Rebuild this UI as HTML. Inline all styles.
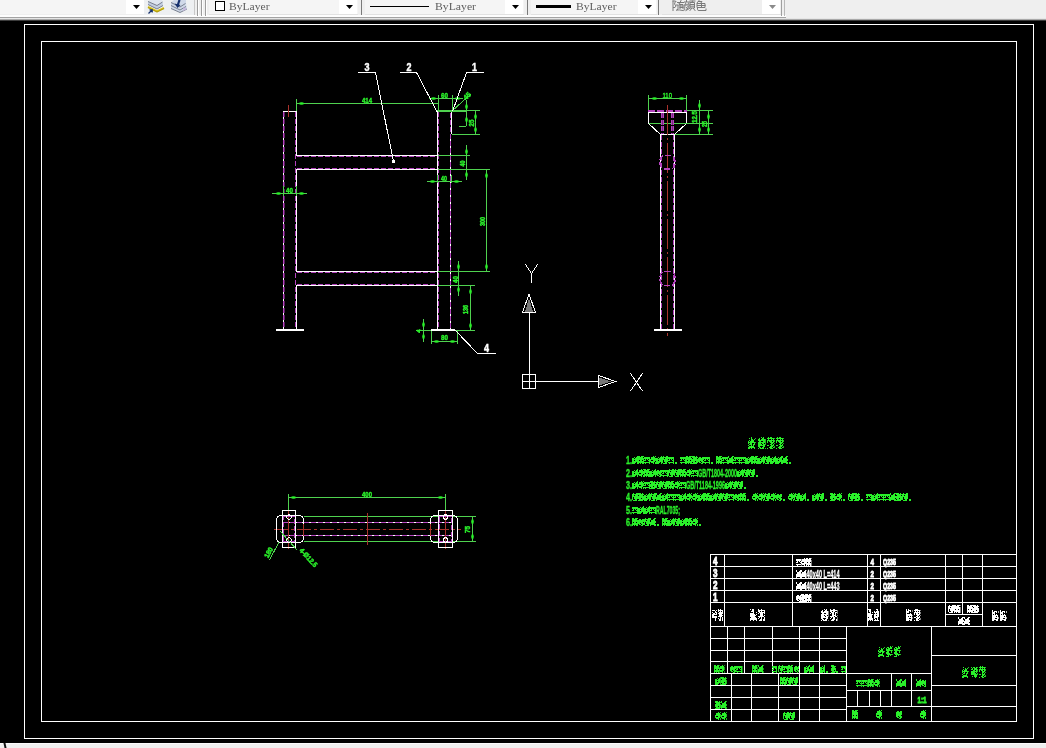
<!DOCTYPE html>
<html><head><meta charset="utf-8">
<style>
html,body{margin:0;padding:0;}
body{width:1046px;height:748px;overflow:hidden;background:#000;position:relative;font-family:"Liberation Sans",sans-serif;}
#bot{position:absolute;left:0;top:743px;width:1046px;height:5px;background:#efefef;}
#bot2{position:absolute;left:0;top:743px;width:1046px;height:1px;background:#fafafa;}
</style></head><body>
<svg width="1046" height="748" viewBox="0 0 1046 748" style="position:absolute;left:0;top:0;will-change:transform" shape-rendering="crispEdges">
<defs><symbol id="d0" viewBox="0 0 6 8" preserveAspectRatio="none"><path d="M3 0h1v1h-1zM5 0h1v1h-1zM1 1h4v1h-4zM1 2h5v1h-5zM0 3h6v1h-6zM0 4h1v1h-1zM3 4h3v1h-3zM0 5h5v1h-5zM1 6h3v1h-3zM5 6h1v1h-1zM3 7h1v1h-1zM5 7h1v1h-1z" fill="currentColor"/></symbol><symbol id="d1" viewBox="0 0 6 8" preserveAspectRatio="none"><path d="M0 0h2v1h-2zM3 0h3v1h-3zM0 1h5v1h-5zM0 2h6v1h-6zM0 3h6v1h-6zM0 4h1v1h-1zM2 4h2v1h-2zM5 4h1v1h-1zM0 5h6v1h-6zM0 6h6v1h-6zM0 7h1v1h-1zM2 7h1v1h-1zM4 7h2v1h-2z" fill="currentColor"/></symbol><symbol id="d2" viewBox="0 0 6 8" preserveAspectRatio="none"><path d="M0 0h3v1h-3zM4 0h1v1h-1zM0 1h6v1h-6zM1 2h4v1h-4zM0 3h6v1h-6zM0 4h6v1h-6zM0 5h3v1h-3zM4 5h2v1h-2zM1 6h5v1h-5zM0 7h5v1h-5z" fill="currentColor"/></symbol><symbol id="d3" viewBox="0 0 6 8" preserveAspectRatio="none"><path d="M1 0h1v1h-1zM4 0h2v1h-2zM0 1h6v1h-6zM0 2h2v1h-2zM3 2h3v1h-3zM0 3h6v1h-6zM0 4h1v1h-1zM2 4h4v1h-4zM0 5h1v1h-1zM2 5h4v1h-4zM0 6h1v1h-1zM3 6h2v1h-2zM1 7h4v1h-4z" fill="currentColor"/></symbol><symbol id="d4" viewBox="0 0 6 8" preserveAspectRatio="none"><path d="M1 1h2v1h-2zM4 1h2v1h-2zM0 2h6v1h-6zM0 3h6v1h-6zM0 4h5v1h-5zM0 5h2v1h-2zM3 5h3v1h-3zM1 6h2v1h-2zM4 6h2v1h-2zM3 7h2v1h-2z" fill="currentColor"/></symbol><symbol id="d5" viewBox="0 0 6 8" preserveAspectRatio="none"><path d="M0 1h6v1h-6zM0 2h6v1h-6zM1 3h1v1h-1zM3 3h1v1h-1zM5 3h1v1h-1zM0 4h2v1h-2zM4 4h2v1h-2zM5 5h1v1h-1zM0 6h6v1h-6zM1 7h1v1h-1zM5 7h1v1h-1z" fill="currentColor"/></symbol><symbol id="d6" viewBox="0 0 6 8" preserveAspectRatio="none"><path d="M5 0h1v1h-1zM2 1h1v1h-1zM4 1h2v1h-2zM0 2h2v1h-2zM3 2h3v1h-3zM0 3h6v1h-6zM0 4h2v1h-2zM3 4h3v1h-3zM0 5h6v1h-6zM0 6h4v1h-4zM5 6h1v1h-1zM0 7h3v1h-3zM5 7h1v1h-1z" fill="currentColor"/></symbol><symbol id="d7" viewBox="0 0 6 8" preserveAspectRatio="none"><path d="M0 0h1v1h-1zM4 0h2v1h-2zM0 1h1v1h-1zM3 1h2v1h-2zM1 2h4v1h-4zM1 3h5v1h-5zM0 4h6v1h-6zM0 5h5v1h-5zM0 6h6v1h-6zM0 7h1v1h-1zM4 7h2v1h-2z" fill="currentColor"/></symbol><symbol id="b0" viewBox="0 0 8 12" preserveAspectRatio="none"><path d="M0 0h1v1h-1zM3 0h1v1h-1zM0 1h1v1h-1zM2 1h4v1h-4zM7 1h1v1h-1zM0 2h4v1h-4zM5 2h1v1h-1zM7 2h1v1h-1zM0 3h4v1h-4zM0 4h1v1h-1zM2 4h1v1h-1zM5 4h1v1h-1zM0 5h7v1h-7zM0 6h8v1h-8zM0 7h3v1h-3zM4 7h1v1h-1zM6 7h1v1h-1zM0 8h8v1h-8zM0 9h4v1h-4zM6 9h2v1h-2zM0 10h7v1h-7zM0 11h2v1h-2zM3 11h1v1h-1zM5 11h2v1h-2z" fill="currentColor"/></symbol><symbol id="b1" viewBox="0 0 8 12" preserveAspectRatio="none"><path d="M5 0h1v1h-1zM7 0h1v1h-1zM1 1h3v1h-3zM5 1h2v1h-2zM0 2h1v1h-1zM2 2h5v1h-5zM0 3h3v1h-3zM4 3h1v1h-1zM0 4h8v1h-8zM1 5h3v1h-3zM6 5h1v1h-1zM1 6h2v1h-2zM4 6h1v1h-1zM6 6h1v1h-1zM0 7h4v1h-4zM6 7h1v1h-1zM0 8h5v1h-5zM1 9h2v1h-2zM4 9h4v1h-4zM2 10h2v1h-2zM5 10h1v1h-1zM0 11h3v1h-3z" fill="currentColor"/></symbol><symbol id="b2" viewBox="0 0 8 12" preserveAspectRatio="none"><path d="M0 1h1v1h-1zM2 1h3v1h-3zM6 1h2v1h-2zM1 2h1v1h-1zM4 2h3v1h-3zM0 3h2v1h-2zM4 3h4v1h-4zM2 4h3v1h-3zM6 4h2v1h-2zM0 5h8v1h-8zM0 6h3v1h-3zM4 6h1v1h-1zM6 6h1v1h-1zM0 7h6v1h-6zM7 7h1v1h-1zM0 8h8v1h-8zM4 9h3v1h-3zM1 10h1v1h-1zM4 10h3v1h-3zM5 11h1v1h-1z" fill="currentColor"/></symbol><symbol id="b3" viewBox="0 0 8 12" preserveAspectRatio="none"><path d="M1 0h1v1h-1zM3 0h2v1h-2zM0 1h8v1h-8zM1 2h1v1h-1zM4 2h1v1h-1zM6 2h1v1h-1zM0 3h8v1h-8zM0 4h1v1h-1zM2 4h3v1h-3zM6 4h2v1h-2zM0 5h1v1h-1zM3 5h4v1h-4zM4 6h2v1h-2zM7 6h1v1h-1zM3 7h2v1h-2zM6 7h1v1h-1zM0 8h2v1h-2zM4 8h3v1h-3zM3 9h3v1h-3zM7 9h1v1h-1zM2 10h3v1h-3zM6 10h2v1h-2zM0 11h1v1h-1zM3 11h3v1h-3z" fill="currentColor"/></symbol><symbol id="b4" viewBox="0 0 8 12" preserveAspectRatio="none"><path d="M0 0h1v1h-1zM3 0h2v1h-2zM0 1h8v1h-8zM0 2h2v1h-2zM3 2h2v1h-2zM7 2h1v1h-1zM1 3h3v1h-3zM5 3h3v1h-3zM0 4h1v1h-1zM2 4h2v1h-2zM5 4h1v1h-1zM7 4h1v1h-1zM2 5h2v1h-2zM5 5h1v1h-1zM2 6h4v1h-4zM7 6h1v1h-1zM0 7h4v1h-4zM5 7h2v1h-2zM1 8h1v1h-1zM3 8h2v1h-2zM7 8h1v1h-1zM0 9h1v1h-1zM3 9h2v1h-2zM7 9h1v1h-1zM2 10h3v1h-3zM6 10h2v1h-2zM1 11h3v1h-3zM6 11h2v1h-2z" fill="currentColor"/></symbol><symbol id="b5" viewBox="0 0 8 12" preserveAspectRatio="none"><path d="M0 0h1v1h-1zM2 0h2v1h-2zM2 1h2v1h-2zM1 2h4v1h-4zM3 3h2v1h-2zM7 3h1v1h-1zM0 4h4v1h-4zM0 5h4v1h-4zM5 5h1v1h-1zM7 5h1v1h-1zM0 6h7v1h-7zM0 7h4v1h-4zM5 7h1v1h-1zM1 8h6v1h-6zM0 9h8v1h-8zM0 10h4v1h-4zM5 10h3v1h-3zM0 11h1v1h-1zM3 11h2v1h-2zM7 11h1v1h-1z" fill="currentColor"/></symbol><symbol id="b6" viewBox="0 0 8 12" preserveAspectRatio="none"><path d="M3 0h1v1h-1zM1 1h1v1h-1zM3 1h1v1h-1zM7 1h1v1h-1zM3 2h2v1h-2zM6 2h1v1h-1zM1 3h1v1h-1zM3 3h3v1h-3zM0 4h1v1h-1zM2 4h4v1h-4zM0 5h8v1h-8zM0 6h1v1h-1zM2 6h2v1h-2zM6 6h1v1h-1zM1 7h3v1h-3zM5 7h2v1h-2zM0 8h1v1h-1zM3 8h1v1h-1zM5 8h1v1h-1zM1 9h5v1h-5zM0 10h7v1h-7zM0 11h2v1h-2zM3 11h1v1h-1zM6 11h1v1h-1z" fill="currentColor"/></symbol><symbol id="b7" viewBox="0 0 8 12" preserveAspectRatio="none"><path d="M3 0h1v1h-1zM5 0h1v1h-1zM1 1h1v1h-1zM4 1h2v1h-2zM0 2h2v1h-2zM3 2h5v1h-5zM0 3h8v1h-8zM1 4h2v1h-2zM5 4h3v1h-3zM0 5h8v1h-8zM0 6h3v1h-3zM4 6h2v1h-2zM7 6h1v1h-1zM0 7h4v1h-4zM5 7h3v1h-3zM0 8h7v1h-7zM0 9h2v1h-2zM5 9h2v1h-2zM1 10h2v1h-2zM4 10h2v1h-2zM0 11h1v1h-1zM2 11h4v1h-4zM7 11h1v1h-1z" fill="currentColor"/></symbol><symbol id="g0" viewBox="0 0 8 8" preserveAspectRatio="none"><path d="M0 0h8v1H0zM0 3h8v1H0zM0 7h8v1H0zM1 0h1v8H1zM5 0h1v8H5z" fill="currentColor"/></symbol><symbol id="g1" viewBox="0 0 8 8" preserveAspectRatio="none"><path d="M0 1h8v1H0zM3 0h1v8H3zM0 4h8v1H0zM1 6h6v1H1zM6 2h1v6H6z" fill="currentColor"/></symbol><symbol id="g2" viewBox="0 0 8 8" preserveAspectRatio="none"><path d="M1 0h1v8H1zM0 2h3v1H0zM3 1h5v1H3zM4 3h4v1H4zM4 5h4v1H4zM3 7h5v1H3zM5 1h1v7H5z" fill="currentColor"/></symbol><symbol id="g3" viewBox="0 0 8 8" preserveAspectRatio="none"><path d="M0 0h3v1H0zM1 0h1v8H1zM0 4h3v1H0zM4 0h4v1H4zM4 0h1v8H4zM7 0h1v8H7zM4 3h4v1H4zM4 7h4v1H4z" fill="currentColor"/></symbol><symbol id="g4" viewBox="0 0 8 8" preserveAspectRatio="none"><path d="M0 1h8v1H0zM2 0h1v3H2zM5 0h1v3H5zM1 3h6v1H1zM1 3h1v5H1zM6 3h1v5H6zM1 5h6v1H1zM0 7h8v1H0zM3 4h1v4H3z" fill="currentColor"/></symbol><symbol id="g5" viewBox="0 0 8 8" preserveAspectRatio="none"><path d="M0 0h1v8H0zM2 0h6v1H2zM2 2h6v1H2zM4 0h1v8H4zM2 4h6v1H2zM2 6h6v1H2zM7 4h1v4H7z" fill="currentColor"/></symbol></defs>
<g shape-rendering="crispEdges">
<rect x="24.5" y="24.5" width="1009" height="714" fill="none" stroke="#ffffff"/>
<rect x="41.5" y="41.5" width="975" height="680" fill="none" stroke="#ffffff"/>
<line x1="283.5" y1="111" x2="283.5" y2="330" stroke="#ffffff" stroke-width="1"/>
<line x1="296.5" y1="111" x2="296.5" y2="156" stroke="#ffffff" stroke-width="1"/>
<line x1="296.5" y1="169" x2="296.5" y2="272" stroke="#ffffff" stroke-width="1"/>
<line x1="296.5" y1="285" x2="296.5" y2="330" stroke="#ffffff" stroke-width="1"/>
<line x1="283" y1="111.5" x2="297" y2="111.5" stroke="#ffffff" stroke-width="1"/>
<rect x="276" y="329" width="28" height="2" fill="#ffffff"/>
<line x1="296" y1="155.5" x2="438" y2="155.5" stroke="#ffffff" stroke-width="1"/>
<line x1="296" y1="169.5" x2="438" y2="169.5" stroke="#ffffff" stroke-width="1"/>
<line x1="296" y1="271.5" x2="438" y2="271.5" stroke="#ffffff" stroke-width="1"/>
<line x1="296" y1="285.5" x2="438" y2="285.5" stroke="#ffffff" stroke-width="1"/>
<line x1="437.5" y1="111" x2="437.5" y2="330" stroke="#ffffff" stroke-width="1"/>
<line x1="451.5" y1="111" x2="451.5" y2="134" stroke="#ffffff" stroke-width="1"/>
<line x1="450.5" y1="134" x2="450.5" y2="330" stroke="#ffffff" stroke-width="1"/>
<rect x="431" y="329" width="24" height="2" fill="#ffffff"/>
<line x1="283.5" y1="112" x2="283.5" y2="329" stroke="#b443be" stroke-width="1" stroke-dasharray="5,2"/>
<line x1="284.5" y1="112" x2="284.5" y2="329" stroke="#5a1f60" stroke-width="1" stroke-dasharray="5,2"/>
<line x1="295.5" y1="112" x2="295.5" y2="329" stroke="#b443be" stroke-width="1" stroke-dasharray="5,2"/>
<line x1="297" y1="156.5" x2="437" y2="156.5" stroke="#b443be" stroke-width="1" stroke-dasharray="5,2"/>
<line x1="297" y1="168.5" x2="437" y2="168.5" stroke="#b443be" stroke-width="1" stroke-dasharray="5,2"/>
<line x1="297" y1="272.5" x2="437" y2="272.5" stroke="#b443be" stroke-width="1" stroke-dasharray="5,2"/>
<line x1="297" y1="284.5" x2="437" y2="284.5" stroke="#b443be" stroke-width="1" stroke-dasharray="5,2"/>
<line x1="438.5" y1="112" x2="438.5" y2="329" stroke="#b443be" stroke-width="1" stroke-dasharray="5,2"/>
<line x1="450.5" y1="113" x2="450.5" y2="329" stroke="#b443be" stroke-width="1" stroke-dasharray="5,2"/>
<line x1="288.5" y1="105" x2="288.5" y2="117" stroke="#a8322c" stroke-width="1"/>
</g>
<g shape-rendering="crispEdges">
<line x1="296" y1="103.5" x2="438" y2="103.5" stroke="#4fd24f" stroke-width="1"/>
<line x1="296.5" y1="99" x2="296.5" y2="111" stroke="#4fd24f" stroke-width="1"/>
<ellipse cx="301.5" cy="103.5" rx="2.5" ry="1.3" fill="#2af02a" shape-rendering="auto"/>
<line x1="429" y1="98.5" x2="463" y2="98.5" stroke="#4fd24f" stroke-width="1"/>
<line x1="438.5" y1="95" x2="438.5" y2="111" stroke="#4fd24f" stroke-width="1"/>
<line x1="452.5" y1="95" x2="452.5" y2="111" stroke="#4fd24f" stroke-width="1"/>
<ellipse cx="433.5" cy="98.5" rx="2.5" ry="1.3" fill="#2af02a" shape-rendering="auto"/>
<ellipse cx="457.5" cy="98.5" rx="2.5" ry="1.3" fill="#2af02a" shape-rendering="auto"/>
<rect x="437" y="110" width="29" height="2" fill="#4fd24f"/>
<line x1="466" y1="110.5" x2="480" y2="110.5" stroke="#4fd24f" stroke-width="1"/>
<line x1="452" y1="134.5" x2="480" y2="134.5" stroke="#4fd24f" stroke-width="1"/>
<line x1="475.5" y1="111" x2="475.5" y2="134" stroke="#4fd24f" stroke-width="1"/>
<ellipse cx="475.5" cy="116.5" rx="1.3" ry="2.5" fill="#2af02a" shape-rendering="auto"/>
<ellipse cx="475.5" cy="129.5" rx="1.3" ry="2.5" fill="#2af02a" shape-rendering="auto"/>
<line x1="466.5" y1="100" x2="466.5" y2="126" stroke="#4fd24f" stroke-width="1"/>
<line x1="459" y1="126.5" x2="466" y2="126.5" stroke="#4fd24f" stroke-width="1"/>
<ellipse cx="466.5" cy="106.5" rx="1.3" ry="2.5" fill="#2af02a" shape-rendering="auto"/>
<ellipse cx="466.5" cy="119.5" rx="1.3" ry="2.5" fill="#2af02a" shape-rendering="auto"/>
<line x1="438" y1="155.5" x2="470" y2="155.5" stroke="#4fd24f" stroke-width="1"/>
<line x1="438" y1="169.5" x2="490" y2="169.5" stroke="#4fd24f" stroke-width="1"/>
<line x1="466.5" y1="145" x2="466.5" y2="180" stroke="#4fd24f" stroke-width="1"/>
<ellipse cx="466.5" cy="151.5" rx="1.3" ry="2.5" fill="#2af02a" shape-rendering="auto"/>
<ellipse cx="466.5" cy="174.5" rx="1.3" ry="2.5" fill="#2af02a" shape-rendering="auto"/>
<line x1="486.5" y1="169" x2="486.5" y2="271" stroke="#4fd24f" stroke-width="1"/>
<ellipse cx="486.5" cy="175.5" rx="1.3" ry="2.5" fill="#2af02a" shape-rendering="auto"/>
<ellipse cx="486.5" cy="266.5" rx="1.3" ry="2.5" fill="#2af02a" shape-rendering="auto"/>
<line x1="438" y1="271.5" x2="490" y2="271.5" stroke="#4fd24f" stroke-width="1"/>
<line x1="458.5" y1="261" x2="458.5" y2="296" stroke="#4fd24f" stroke-width="1"/>
<ellipse cx="458.5" cy="266.5" rx="1.3" ry="2.5" fill="#2af02a" shape-rendering="auto"/>
<ellipse cx="458.5" cy="289.5" rx="1.3" ry="2.5" fill="#2af02a" shape-rendering="auto"/>
<line x1="438" y1="285.5" x2="475" y2="285.5" stroke="#4fd24f" stroke-width="1"/>
<line x1="470.5" y1="285" x2="470.5" y2="330" stroke="#4fd24f" stroke-width="1"/>
<ellipse cx="470.5" cy="291.5" rx="1.3" ry="2.5" fill="#2af02a" shape-rendering="auto"/>
<ellipse cx="470.5" cy="325.5" rx="1.3" ry="2.5" fill="#2af02a" shape-rendering="auto"/>
<line x1="455" y1="330.5" x2="475" y2="330.5" stroke="#4fd24f" stroke-width="1"/>
<line x1="427" y1="181.5" x2="462" y2="181.5" stroke="#4fd24f" stroke-width="1"/>
<line x1="437.5" y1="175" x2="437.5" y2="183" stroke="#4fd24f" stroke-width="1"/>
<line x1="451.5" y1="175" x2="451.5" y2="183" stroke="#4fd24f" stroke-width="1"/>
<ellipse cx="432.5" cy="181.5" rx="2.5" ry="1.3" fill="#2af02a" shape-rendering="auto"/>
<ellipse cx="456.5" cy="181.5" rx="2.5" ry="1.3" fill="#2af02a" shape-rendering="auto"/>
<line x1="272" y1="193.5" x2="307" y2="193.5" stroke="#4fd24f" stroke-width="1"/>
<line x1="283.5" y1="186" x2="283.5" y2="196" stroke="#4fd24f" stroke-width="1"/>
<line x1="296.5" y1="186" x2="296.5" y2="196" stroke="#4fd24f" stroke-width="1"/>
<ellipse cx="278.5" cy="193.5" rx="2.5" ry="1.3" fill="#2af02a" shape-rendering="auto"/>
<ellipse cx="301.5" cy="193.5" rx="2.5" ry="1.3" fill="#2af02a" shape-rendering="auto"/>
<line x1="431" y1="341.5" x2="458" y2="341.5" stroke="#4fd24f" stroke-width="1"/>
<line x1="431.5" y1="331" x2="431.5" y2="344" stroke="#4fd24f" stroke-width="1"/>
<line x1="457.5" y1="331" x2="457.5" y2="344" stroke="#4fd24f" stroke-width="1"/>
<ellipse cx="436.5" cy="341.5" rx="2.5" ry="1.3" fill="#2af02a" shape-rendering="auto"/>
<ellipse cx="452.5" cy="341.5" rx="2.5" ry="1.3" fill="#2af02a" shape-rendering="auto"/>
<line x1="423.5" y1="319" x2="423.5" y2="342" stroke="#4fd24f" stroke-width="1"/>
<line x1="416" y1="330.5" x2="431" y2="330.5" stroke="#4fd24f" stroke-width="1"/>
<ellipse cx="423.5" cy="324.5" rx="1.3" ry="2.5" fill="#2af02a" shape-rendering="auto"/>
<ellipse cx="423.5" cy="336.5" rx="1.3" ry="2.5" fill="#2af02a" shape-rendering="auto"/>
</g>
<line x1="452" y1="111" x2="471" y2="94" stroke="#4fd24f" stroke-width="1"/>
<text x="0" y="0" transform="translate(467,96) rotate(-45)" text-anchor="middle" dominant-baseline="central" font-family="Liberation Sans" font-weight="bold" font-size="7" fill="#2af02a" stroke="#2af02a" stroke-width="0.45">45</text>
<text x="362" y="103" text-anchor="start" font-family="Liberation Sans" font-weight="bold" font-size="8" fill="#2af02a" stroke="#2af02a" stroke-width="0.45" textLength="10" lengthAdjust="spacingAndGlyphs">414</text>
<text x="441" y="98" text-anchor="start" font-family="Liberation Sans" font-weight="bold" font-size="8" fill="#2af02a" stroke="#2af02a" stroke-width="0.45" textLength="7" lengthAdjust="spacingAndGlyphs">60</text>
<text x="0" y="0" transform="translate(471,123) rotate(-90)" text-anchor="middle" dominant-baseline="central" font-family="Liberation Sans" font-weight="bold" font-size="7" fill="#2af02a" stroke="#2af02a" stroke-width="0.45" textLength="7" lengthAdjust="spacingAndGlyphs">25</text>
<text x="0" y="0" transform="translate(462.5,163.5) rotate(-90)" text-anchor="middle" dominant-baseline="central" font-family="Liberation Sans" font-weight="bold" font-size="7" fill="#2af02a" stroke="#2af02a" stroke-width="0.45" textLength="6" lengthAdjust="spacingAndGlyphs">40</text>
<text x="0" y="0" transform="translate(482,221.5) rotate(-90)" text-anchor="middle" dominant-baseline="central" font-family="Liberation Sans" font-weight="bold" font-size="7" fill="#2af02a" stroke="#2af02a" stroke-width="0.45" textLength="9" lengthAdjust="spacingAndGlyphs">300</text>
<text x="0" y="0" transform="translate(455,279.5) rotate(-90)" text-anchor="middle" dominant-baseline="central" font-family="Liberation Sans" font-weight="bold" font-size="7" fill="#2af02a" stroke="#2af02a" stroke-width="0.45" textLength="7" lengthAdjust="spacingAndGlyphs">40</text>
<text x="0" y="0" transform="translate(465.5,309.5) rotate(-90)" text-anchor="middle" dominant-baseline="central" font-family="Liberation Sans" font-weight="bold" font-size="7" fill="#2af02a" stroke="#2af02a" stroke-width="0.45" textLength="9" lengthAdjust="spacingAndGlyphs">136</text>
<text x="441" y="181" text-anchor="start" font-family="Liberation Sans" font-weight="bold" font-size="8" fill="#2af02a" stroke="#2af02a" stroke-width="0.45" textLength="6" lengthAdjust="spacingAndGlyphs">40</text>
<text x="286" y="193" text-anchor="start" font-family="Liberation Sans" font-weight="bold" font-size="8" fill="#2af02a" stroke="#2af02a" stroke-width="0.45" textLength="7" lengthAdjust="spacingAndGlyphs">40</text>
<text x="441" y="339.5" text-anchor="start" font-family="Liberation Sans" font-weight="bold" font-size="8" fill="#2af02a" stroke="#2af02a" stroke-width="0.45" textLength="7" lengthAdjust="spacingAndGlyphs">80</text>
<text x="0" y="0" transform="translate(419,331) rotate(-90)" text-anchor="middle" dominant-baseline="central" font-family="Liberation Sans" font-weight="bold" font-size="6" fill="#2af02a" stroke="#2af02a" stroke-width="0.45">4</text>
<line x1="358" y1="72.5" x2="376" y2="72.5" stroke="#ffffff" stroke-width="1"/>
<line x1="375.5" y1="72.5" x2="393.5" y2="161.5" stroke="#ffffff" stroke-width="1"/>
<rect x="392" y="160" width="3" height="3" fill="#ffffff"/>
<line x1="400" y1="72.5" x2="417" y2="72.5" stroke="#ffffff" stroke-width="1"/>
<line x1="416.5" y1="72.5" x2="437.5" y2="112.5" stroke="#ffffff" stroke-width="1"/>
<line x1="466" y1="72.5" x2="484" y2="72.5" stroke="#ffffff" stroke-width="1"/>
<line x1="466.5" y1="72.5" x2="452.5" y2="111.5" stroke="#ffffff" stroke-width="1"/>
<line x1="455" y1="330" x2="477.5" y2="353.5" stroke="#ffffff" stroke-width="1"/>
<line x1="477" y1="353.5" x2="496" y2="353.5" stroke="#ffffff" stroke-width="1"/>
<text x="364.5" y="71" text-anchor="start" font-family="Liberation Sans" font-weight="bold" font-size="10" fill="#ffffff" stroke="#ffffff" stroke-width="0.45" textLength="5" lengthAdjust="spacingAndGlyphs">3</text>
<text x="406.5" y="71" text-anchor="start" font-family="Liberation Sans" font-weight="bold" font-size="10" fill="#ffffff" stroke="#ffffff" stroke-width="0.45" textLength="5" lengthAdjust="spacingAndGlyphs">2</text>
<text x="472" y="71" text-anchor="start" font-family="Liberation Sans" font-weight="bold" font-size="10" fill="#ffffff" stroke="#ffffff" stroke-width="0.45" textLength="5" lengthAdjust="spacingAndGlyphs">1</text>
<text x="484" y="352" text-anchor="start" font-family="Liberation Sans" font-weight="bold" font-size="10" fill="#ffffff" stroke="#ffffff" stroke-width="0.45" textLength="5" lengthAdjust="spacingAndGlyphs">4</text>
<g shape-rendering="crispEdges">
<line x1="648" y1="98.5" x2="687" y2="98.5" stroke="#4fd24f" stroke-width="1"/>
<line x1="648.5" y1="95" x2="648.5" y2="111" stroke="#4fd24f" stroke-width="1"/>
<line x1="686.5" y1="95" x2="686.5" y2="111" stroke="#4fd24f" stroke-width="1"/>
<ellipse cx="654.5" cy="98.5" rx="2.5" ry="1.3" fill="#2af02a" shape-rendering="auto"/>
<ellipse cx="681.5" cy="98.5" rx="2.5" ry="1.3" fill="#2af02a" shape-rendering="auto"/>
<line x1="648" y1="110.5" x2="687" y2="110.5" stroke="#b443be" stroke-width="2" stroke-dasharray="7,2"/>
<line x1="648" y1="112.5" x2="687" y2="112.5" stroke="#ffffff" stroke-width="1"/>
<line x1="648.5" y1="112" x2="648.5" y2="123" stroke="#ffffff" stroke-width="1"/>
<line x1="686.5" y1="112" x2="686.5" y2="123" stroke="#ffffff" stroke-width="1"/>
<line x1="648" y1="123.5" x2="713" y2="123.5" stroke="#4fd24f" stroke-width="1"/>
<line x1="687" y1="110.5" x2="713" y2="110.5" stroke="#4fd24f" stroke-width="1"/>
<line x1="661" y1="134.5" x2="713" y2="134.5" stroke="#4fd24f" stroke-width="1"/>
<line x1="660" y1="134.5" x2="675" y2="134.5" stroke="#ffffff" stroke-width="1"/>
<line x1="699.5" y1="100" x2="699.5" y2="134" stroke="#4fd24f" stroke-width="1"/>
<ellipse cx="699.5" cy="105.5" rx="1.3" ry="2.5" fill="#2af02a" shape-rendering="auto"/>
<ellipse cx="699.5" cy="129.5" rx="1.3" ry="2.5" fill="#2af02a" shape-rendering="auto"/>
<line x1="708.5" y1="110" x2="708.5" y2="134" stroke="#4fd24f" stroke-width="1"/>
<ellipse cx="708.5" cy="116.5" rx="1.3" ry="2.5" fill="#2af02a" shape-rendering="auto"/>
<ellipse cx="708.5" cy="129.5" rx="1.3" ry="2.5" fill="#2af02a" shape-rendering="auto"/>
<line x1="660.5" y1="134" x2="660.5" y2="330" stroke="#ffffff" stroke-width="1"/>
<line x1="674.5" y1="134" x2="674.5" y2="330" stroke="#ffffff" stroke-width="1"/>
<line x1="661.5" y1="135" x2="661.5" y2="329" stroke="#b443be" stroke-width="1" stroke-dasharray="5,2"/>
<line x1="673.5" y1="135" x2="673.5" y2="329" stroke="#b443be" stroke-width="1" stroke-dasharray="5,2"/>
<line x1="661.5" y1="113" x2="661.5" y2="134" stroke="#b443be" stroke-width="1" stroke-dasharray="5,1.5"/>
<line x1="663.5" y1="113" x2="663.5" y2="134" stroke="#b443be" stroke-width="1" stroke-dasharray="5,1.5"/>
<line x1="671.5" y1="113" x2="671.5" y2="134" stroke="#b443be" stroke-width="1" stroke-dasharray="5,1.5"/>
<line x1="673.5" y1="113" x2="673.5" y2="134" stroke="#b443be" stroke-width="1" stroke-dasharray="5,1.5"/>
<line x1="662.5" y1="113" x2="662.5" y2="134" stroke="#7a2a82" stroke-width="1" stroke-dasharray="5,1.5"/>
<line x1="672.5" y1="113" x2="672.5" y2="134" stroke="#7a2a82" stroke-width="1" stroke-dasharray="5,1.5"/>
<line x1="667.5" y1="105" x2="667.5" y2="336" stroke="#a8322c" stroke-width="1" stroke-dasharray="30,3,2,3"/>
<rect x="654" y="329" width="28" height="2" fill="#ffffff"/>
</g>
<line x1="648.5" y1="123.5" x2="660.5" y2="134.5" stroke="#ffffff" stroke-width="1"/>
<line x1="686.5" y1="123.5" x2="674.5" y2="134.5" stroke="#ffffff" stroke-width="1"/>
<rect x="660" y="155.5" width="15" height="13.5" rx="5" fill="none" stroke="#b443be" stroke-width="1.3" stroke-dasharray="6,2"/>
<rect x="660" y="271.5" width="15" height="14" rx="5" fill="none" stroke="#b443be" stroke-width="1.3" stroke-dasharray="6,2"/>
<text x="662.5" y="98" text-anchor="start" font-family="Liberation Sans" font-weight="normal" font-size="8" fill="#2af02a" stroke="#2af02a" stroke-width="0.45" textLength="9.5" lengthAdjust="spacingAndGlyphs">110</text>
<text x="0" y="0" transform="translate(694.5,117) rotate(-90)" text-anchor="middle" dominant-baseline="central" font-family="Liberation Sans" font-weight="bold" font-size="7" fill="#2af02a" stroke="#2af02a" stroke-width="0.45" textLength="12" lengthAdjust="spacingAndGlyphs">12.5</text>
<text x="0" y="0" transform="translate(704.5,124) rotate(-90)" text-anchor="middle" dominant-baseline="central" font-family="Liberation Sans" font-weight="bold" font-size="7" fill="#2af02a" stroke="#2af02a" stroke-width="0.45" textLength="6" lengthAdjust="spacingAndGlyphs">25</text>
<g shape-rendering="crispEdges">
<line x1="288" y1="497.5" x2="446" y2="497.5" stroke="#4fd24f" stroke-width="1"/>
<line x1="288.5" y1="494" x2="288.5" y2="511" stroke="#4fd24f" stroke-width="1"/>
<line x1="445.5" y1="494" x2="445.5" y2="511" stroke="#4fd24f" stroke-width="1"/>
<ellipse cx="293.5" cy="497.5" rx="2.5" ry="1.3" fill="#2af02a" shape-rendering="auto"/>
<ellipse cx="440.5" cy="497.5" rx="2.5" ry="1.3" fill="#2af02a" shape-rendering="auto"/>
<line x1="304" y1="516.5" x2="476" y2="516.5" stroke="#4fd24f" stroke-width="1"/>
<line x1="304" y1="541.5" x2="476" y2="541.5" stroke="#4fd24f" stroke-width="1"/>
<line x1="283" y1="522.5" x2="452" y2="522.5" stroke="#ffffff" stroke-width="1"/>
<line x1="283" y1="535.5" x2="452" y2="535.5" stroke="#ffffff" stroke-width="1"/>
<line x1="283" y1="522.5" x2="452" y2="522.5" stroke="#b443be" stroke-width="1" stroke-dasharray="5,2"/>
<line x1="283" y1="535.5" x2="452" y2="535.5" stroke="#b443be" stroke-width="1" stroke-dasharray="5,2"/>
<line x1="274" y1="529.5" x2="461" y2="529.5" stroke="#a8322c" stroke-width="1" stroke-dasharray="14,3,3,3"/>
<line x1="288.5" y1="511" x2="288.5" y2="549" stroke="#a8322c" stroke-width="1"/>
<line x1="367.5" y1="513" x2="367.5" y2="545" stroke="#a8322c" stroke-width="1"/>
<line x1="445.5" y1="510" x2="445.5" y2="549" stroke="#a8322c" stroke-width="1"/>
<line x1="472.5" y1="516" x2="472.5" y2="541" stroke="#4fd24f" stroke-width="1"/>
<ellipse cx="472.5" cy="521.5" rx="1.3" ry="2.5" fill="#2af02a" shape-rendering="auto"/>
<ellipse cx="472.5" cy="536.5" rx="1.3" ry="2.5" fill="#2af02a" shape-rendering="auto"/>
</g>
<rect x="282.5" y="510.5" width="13.0" height="37" fill="none" stroke="#ffffff" shape-rendering="crispEdges"/>
<rect x="283.5" y="515.5" width="11.0" height="26" fill="none" stroke="#b443be" stroke-dasharray="5,2" shape-rendering="crispEdges"/>
<rect x="283.0" y="515" width="12.0" height="2" fill="#b443be"/>
<rect x="283.0" y="541" width="12.0" height="2" fill="#b443be"/>
<rect x="438.5" y="510.5" width="14.0" height="37" fill="none" stroke="#ffffff" shape-rendering="crispEdges"/>
<rect x="439.5" y="515.5" width="12.0" height="26" fill="none" stroke="#b443be" stroke-dasharray="5,2" shape-rendering="crispEdges"/>
<rect x="439.0" y="515" width="13.0" height="2" fill="#b443be"/>
<rect x="439.0" y="541" width="13.0" height="2" fill="#b443be"/>
<rect x="276.5" y="515.5" width="27" height="27" rx="4.5" fill="none" stroke="#ffffff"/>
<rect x="430.5" y="515.5" width="27" height="27" rx="4.5" fill="none" stroke="#ffffff"/>
<line x1="303.5" y1="524" x2="303.5" y2="536" stroke="#a8322c" stroke-width="1"/>
<line x1="430.5" y1="524" x2="430.5" y2="536" stroke="#a8322c" stroke-width="1"/>
<circle cx="289" cy="517" r="2.2" fill="none" stroke="#ffffff"/>
<circle cx="289" cy="540" r="2.2" fill="none" stroke="#ffffff"/>
<circle cx="445.5" cy="517" r="2.2" fill="none" stroke="#ffffff"/>
<circle cx="445.5" cy="540" r="2.2" fill="none" stroke="#ffffff"/>
<line x1="280" y1="531" x2="297" y2="550" stroke="#4fd24f" stroke-width="1"/>
<line x1="279" y1="542" x2="269.5" y2="560" stroke="#4fd24f" stroke-width="1"/>
<text x="362" y="497" text-anchor="start" font-family="Liberation Sans" font-weight="bold" font-size="8" fill="#2af02a" stroke="#2af02a" stroke-width="0.45" textLength="10" lengthAdjust="spacingAndGlyphs">400</text>
<text x="0" y="0" transform="translate(467.5,529.5) rotate(-90)" text-anchor="middle" dominant-baseline="central" font-family="Liberation Sans" font-weight="bold" font-size="7" fill="#2af02a" stroke="#2af02a" stroke-width="0.45" textLength="7" lengthAdjust="spacingAndGlyphs">75</text>
<text x="0" y="0" transform="translate(308.5,557.5) rotate(48)" text-anchor="middle" dominant-baseline="central" font-family="Liberation Sans" font-weight="bold" font-size="7" fill="#2af02a" stroke="#2af02a" stroke-width="0.45" textLength="23" lengthAdjust="spacingAndGlyphs">4-Ø12.5</text>
<text x="0" y="0" transform="translate(268.5,552.5) rotate(-60)" text-anchor="middle" dominant-baseline="central" font-family="Liberation Sans" font-weight="bold" font-size="7" fill="#2af02a" stroke="#2af02a" stroke-width="0.45" textLength="11" lengthAdjust="spacingAndGlyphs">180</text>
<g shape-rendering="crispEdges">
<rect x="522.5" y="374.5" width="13" height="14" fill="none" stroke="#ffffff"/>
<line x1="529.5" y1="312" x2="529.5" y2="388" stroke="#ffffff" stroke-width="1"/>
<line x1="522" y1="381.5" x2="598" y2="381.5" stroke="#ffffff" stroke-width="1"/>
</g>
<path d="M522.5 312.5 L529 294 L535.5 312.5 Z" fill="none" stroke="#ffffff"/>
<path d="M525 312 L529 298 L533 312 Z" fill="#777"/>
<path d="M598.5 375.5 L615.5 381.5 L598.5 387.5 Z" fill="none" stroke="#ffffff"/>
<path d="M599 377.5 L611 381.5 L599 385.5 Z" fill="#777"/>
<path d="M525.5 264.5 L531.5 273.5 L537.5 264.5 M531.5 273.5 V283" fill="none" stroke="#ffffff"/>
<path d="M630.5 373.5 L642.5 391 M642.5 373.5 L630.5 391" fill="none" stroke="#ffffff"/>
<use href="#b6" x="748" y="437" width="7.80" height="12.00" color="#2af02a"/>
<use href="#b7" x="758" y="437" width="7.80" height="12.00" color="#2af02a"/>
<use href="#b3" x="767" y="437" width="7.80" height="12.00" color="#2af02a"/>
<use href="#b3" x="776" y="437" width="7.80" height="12.00" color="#2af02a"/>
<text x="626.00" y="464.00" font-family="Liberation Sans" font-weight="bold" font-size="10.40" fill="#2af02a" stroke="#2af02a" stroke-width="0.35" textLength="6.00" lengthAdjust="spacingAndGlyphs">1.</text>
<use href="#d6" x="632" y="456" width="6.00" height="8.00" color="#2af02a"/>
<use href="#d1" x="638" y="456" width="6.00" height="8.00" color="#2af02a"/>
<use href="#d5" x="644" y="456" width="6.00" height="8.00" color="#2af02a"/>
<use href="#d0" x="650" y="456" width="6.00" height="8.00" color="#2af02a"/>
<use href="#d6" x="656" y="456" width="6.00" height="8.00" color="#2af02a"/>
<use href="#d3" x="662" y="456" width="6.00" height="8.00" color="#2af02a"/>
<use href="#d5" x="668" y="456" width="6.00" height="8.00" color="#2af02a"/>
<rect x="674.5" y="462" width="2" height="2" fill="#2af02a"/>
<use href="#d5" x="680" y="456" width="6.00" height="8.00" color="#2af02a"/>
<use href="#d1" x="686" y="456" width="6.00" height="8.00" color="#2af02a"/>
<use href="#d2" x="692" y="456" width="6.00" height="8.00" color="#2af02a"/>
<use href="#d4" x="698" y="456" width="6.00" height="8.00" color="#2af02a"/>
<use href="#d5" x="704" y="456" width="6.00" height="8.00" color="#2af02a"/>
<rect x="710.5" y="462" width="2" height="2" fill="#2af02a"/>
<use href="#d1" x="716" y="456" width="6.00" height="8.00" color="#2af02a"/>
<use href="#d5" x="722" y="456" width="6.00" height="8.00" color="#2af02a"/>
<use href="#d7" x="728" y="456" width="6.00" height="8.00" color="#2af02a"/>
<use href="#d5" x="734" y="456" width="6.00" height="8.00" color="#2af02a"/>
<use href="#d5" x="740" y="456" width="6.00" height="8.00" color="#2af02a"/>
<use href="#d6" x="746" y="456" width="6.00" height="8.00" color="#2af02a"/>
<use href="#d1" x="752" y="456" width="6.00" height="8.00" color="#2af02a"/>
<use href="#d6" x="758" y="456" width="6.00" height="8.00" color="#2af02a"/>
<use href="#d3" x="764" y="456" width="6.00" height="8.00" color="#2af02a"/>
<use href="#d6" x="770" y="456" width="6.00" height="8.00" color="#2af02a"/>
<use href="#d6" x="776" y="456" width="6.00" height="8.00" color="#2af02a"/>
<use href="#d7" x="782" y="456" width="6.00" height="8.00" color="#2af02a"/>
<rect x="788.5" y="462" width="2" height="2" fill="#2af02a"/>
<text x="626.00" y="477.00" font-family="Liberation Sans" font-weight="bold" font-size="10.40" fill="#2af02a" stroke="#2af02a" stroke-width="0.35" textLength="6.00" lengthAdjust="spacingAndGlyphs">2.</text>
<use href="#d6" x="632" y="469" width="6.00" height="8.00" color="#2af02a"/>
<use href="#d0" x="638" y="469" width="6.00" height="8.00" color="#2af02a"/>
<use href="#d1" x="644" y="469" width="6.00" height="8.00" color="#2af02a"/>
<use href="#d6" x="650" y="469" width="6.00" height="8.00" color="#2af02a"/>
<use href="#d4" x="656" y="469" width="6.00" height="8.00" color="#2af02a"/>
<use href="#d5" x="662" y="469" width="6.00" height="8.00" color="#2af02a"/>
<use href="#d3" x="668" y="469" width="6.00" height="8.00" color="#2af02a"/>
<use href="#d3" x="674" y="469" width="6.00" height="8.00" color="#2af02a"/>
<use href="#d1" x="680" y="469" width="6.00" height="8.00" color="#2af02a"/>
<use href="#d0" x="686" y="469" width="6.00" height="8.00" color="#2af02a"/>
<use href="#d5" x="692" y="469" width="6.00" height="8.00" color="#2af02a"/>
<text x="698.00" y="477.00" font-family="Liberation Sans" font-weight="bold" font-size="10.40" fill="#2af02a" stroke="#2af02a" stroke-width="0.35" textLength="39.00" lengthAdjust="spacingAndGlyphs">GB/T1804-2000</text>
<use href="#d6" x="737" y="469" width="6.00" height="8.00" color="#2af02a"/>
<use href="#d3" x="743" y="469" width="6.00" height="8.00" color="#2af02a"/>
<use href="#d3" x="749" y="469" width="6.00" height="8.00" color="#2af02a"/>
<rect x="755.5" y="475" width="2" height="2" fill="#2af02a"/>
<text x="626.00" y="489.00" font-family="Liberation Sans" font-weight="bold" font-size="10.40" fill="#2af02a" stroke="#2af02a" stroke-width="0.35" textLength="6.00" lengthAdjust="spacingAndGlyphs">3.</text>
<use href="#d6" x="632" y="481" width="6.00" height="8.00" color="#2af02a"/>
<use href="#d0" x="638" y="481" width="6.00" height="8.00" color="#2af02a"/>
<use href="#d5" x="644" y="481" width="6.00" height="8.00" color="#2af02a"/>
<use href="#d2" x="650" y="481" width="6.00" height="8.00" color="#2af02a"/>
<use href="#d3" x="656" y="481" width="6.00" height="8.00" color="#2af02a"/>
<use href="#d3" x="662" y="481" width="6.00" height="8.00" color="#2af02a"/>
<use href="#d1" x="668" y="481" width="6.00" height="8.00" color="#2af02a"/>
<use href="#d0" x="674" y="481" width="6.00" height="8.00" color="#2af02a"/>
<use href="#d5" x="680" y="481" width="6.00" height="8.00" color="#2af02a"/>
<text x="686.00" y="489.00" font-family="Liberation Sans" font-weight="bold" font-size="10.40" fill="#2af02a" stroke="#2af02a" stroke-width="0.35" textLength="39.00" lengthAdjust="spacingAndGlyphs">GB/T1184-1996</text>
<use href="#d6" x="725" y="481" width="6.00" height="8.00" color="#2af02a"/>
<use href="#d3" x="731" y="481" width="6.00" height="8.00" color="#2af02a"/>
<use href="#d3" x="737" y="481" width="6.00" height="8.00" color="#2af02a"/>
<rect x="743.5" y="487" width="2" height="2" fill="#2af02a"/>
<text x="626.00" y="501.00" font-family="Liberation Sans" font-weight="bold" font-size="10.40" fill="#2af02a" stroke="#2af02a" stroke-width="0.35" textLength="6.00" lengthAdjust="spacingAndGlyphs">4.</text>
<use href="#d3" x="632" y="493" width="6.00" height="8.00" color="#2af02a"/>
<use href="#d2" x="638" y="493" width="6.00" height="8.00" color="#2af02a"/>
<use href="#d6" x="644" y="493" width="6.00" height="8.00" color="#2af02a"/>
<use href="#d3" x="650" y="493" width="6.00" height="8.00" color="#2af02a"/>
<use href="#d7" x="656" y="493" width="6.00" height="8.00" color="#2af02a"/>
<use href="#d6" x="662" y="493" width="6.00" height="8.00" color="#2af02a"/>
<use href="#d5" x="668" y="493" width="6.00" height="8.00" color="#2af02a"/>
<use href="#d5" x="674" y="493" width="6.00" height="8.00" color="#2af02a"/>
<use href="#d6" x="680" y="493" width="6.00" height="8.00" color="#2af02a"/>
<use href="#d0" x="686" y="493" width="6.00" height="8.00" color="#2af02a"/>
<use href="#d0" x="692" y="493" width="6.00" height="8.00" color="#2af02a"/>
<use href="#d6" x="698" y="493" width="6.00" height="8.00" color="#2af02a"/>
<use href="#d1" x="704" y="493" width="6.00" height="8.00" color="#2af02a"/>
<use href="#d6" x="710" y="493" width="6.00" height="8.00" color="#2af02a"/>
<use href="#d3" x="716" y="493" width="6.00" height="8.00" color="#2af02a"/>
<use href="#d3" x="722" y="493" width="6.00" height="8.00" color="#2af02a"/>
<use href="#d5" x="728" y="493" width="6.00" height="8.00" color="#2af02a"/>
<use href="#d4" x="734" y="493" width="6.00" height="8.00" color="#2af02a"/>
<use href="#d1" x="740" y="493" width="6.00" height="8.00" color="#2af02a"/>
<rect x="746.5" y="499" width="2" height="2" fill="#2af02a"/>
<use href="#d0" x="752" y="493" width="6.00" height="8.00" color="#2af02a"/>
<use href="#d0" x="758" y="493" width="6.00" height="8.00" color="#2af02a"/>
<use href="#d3" x="764" y="493" width="6.00" height="8.00" color="#2af02a"/>
<use href="#d0" x="770" y="493" width="6.00" height="8.00" color="#2af02a"/>
<use href="#d4" x="776" y="493" width="6.00" height="8.00" color="#2af02a"/>
<rect x="782.5" y="499" width="2" height="2" fill="#2af02a"/>
<use href="#d0" x="788" y="493" width="6.00" height="8.00" color="#2af02a"/>
<use href="#d3" x="794" y="493" width="6.00" height="8.00" color="#2af02a"/>
<use href="#d6" x="800" y="493" width="6.00" height="8.00" color="#2af02a"/>
<rect x="806.5" y="499" width="2" height="2" fill="#2af02a"/>
<use href="#d6" x="812" y="493" width="6.00" height="8.00" color="#2af02a"/>
<use href="#d3" x="818" y="493" width="6.00" height="8.00" color="#2af02a"/>
<rect x="824.5" y="499" width="2" height="2" fill="#2af02a"/>
<use href="#d2" x="830" y="493" width="6.00" height="8.00" color="#2af02a"/>
<use href="#d0" x="836" y="493" width="6.00" height="8.00" color="#2af02a"/>
<rect x="842.5" y="499" width="2" height="2" fill="#2af02a"/>
<use href="#d3" x="848" y="493" width="6.00" height="8.00" color="#2af02a"/>
<use href="#d2" x="854" y="493" width="6.00" height="8.00" color="#2af02a"/>
<rect x="860.5" y="499" width="2" height="2" fill="#2af02a"/>
<use href="#d5" x="866" y="493" width="6.00" height="8.00" color="#2af02a"/>
<use href="#d6" x="872" y="493" width="6.00" height="8.00" color="#2af02a"/>
<use href="#d5" x="878" y="493" width="6.00" height="8.00" color="#2af02a"/>
<use href="#d5" x="884" y="493" width="6.00" height="8.00" color="#2af02a"/>
<use href="#d7" x="890" y="493" width="6.00" height="8.00" color="#2af02a"/>
<use href="#d2" x="896" y="493" width="6.00" height="8.00" color="#2af02a"/>
<use href="#d3" x="902" y="493" width="6.00" height="8.00" color="#2af02a"/>
<rect x="908.5" y="499" width="2" height="2" fill="#2af02a"/>
<text x="626.00" y="514.00" font-family="Liberation Sans" font-weight="bold" font-size="10.40" fill="#2af02a" stroke="#2af02a" stroke-width="0.35" textLength="6.00" lengthAdjust="spacingAndGlyphs">5.</text>
<use href="#d5" x="632" y="506" width="6.00" height="8.00" color="#2af02a"/>
<use href="#d6" x="638" y="506" width="6.00" height="8.00" color="#2af02a"/>
<use href="#d6" x="644" y="506" width="6.00" height="8.00" color="#2af02a"/>
<use href="#d5" x="650" y="506" width="6.00" height="8.00" color="#2af02a"/>
<text x="656.00" y="514.00" font-family="Liberation Sans" font-weight="bold" font-size="10.40" fill="#2af02a" stroke="#2af02a" stroke-width="0.35" textLength="24.00" lengthAdjust="spacingAndGlyphs">RAL7035;</text>
<text x="626.00" y="526.00" font-family="Liberation Sans" font-weight="bold" font-size="10.40" fill="#2af02a" stroke="#2af02a" stroke-width="0.35" textLength="6.00" lengthAdjust="spacingAndGlyphs">6.</text>
<use href="#d1" x="632" y="518" width="6.00" height="8.00" color="#2af02a"/>
<use href="#d4" x="638" y="518" width="6.00" height="8.00" color="#2af02a"/>
<use href="#d3" x="644" y="518" width="6.00" height="8.00" color="#2af02a"/>
<use href="#d7" x="650" y="518" width="6.00" height="8.00" color="#2af02a"/>
<rect x="656.5" y="524" width="2" height="2" fill="#2af02a"/>
<use href="#d1" x="662" y="518" width="6.00" height="8.00" color="#2af02a"/>
<use href="#d6" x="668" y="518" width="6.00" height="8.00" color="#2af02a"/>
<use href="#d3" x="674" y="518" width="6.00" height="8.00" color="#2af02a"/>
<use href="#d6" x="680" y="518" width="6.00" height="8.00" color="#2af02a"/>
<use href="#d1" x="686" y="518" width="6.00" height="8.00" color="#2af02a"/>
<use href="#d0" x="692" y="518" width="6.00" height="8.00" color="#2af02a"/>
<rect x="698.5" y="524" width="2" height="2" fill="#2af02a"/>
<g shape-rendering="crispEdges">
<line x1="710" y1="554.5" x2="1017" y2="554.5" stroke="#ffffff" stroke-width="1"/>
<line x1="710" y1="566.5" x2="1017" y2="566.5" stroke="#ffffff" stroke-width="1"/>
<line x1="710" y1="578.5" x2="1017" y2="578.5" stroke="#ffffff" stroke-width="1"/>
<line x1="710" y1="590.5" x2="1017" y2="590.5" stroke="#ffffff" stroke-width="1"/>
<line x1="710" y1="602.5" x2="1017" y2="602.5" stroke="#ffffff" stroke-width="1"/>
<line x1="710" y1="626.5" x2="1017" y2="626.5" stroke="#ffffff" stroke-width="1"/>
<line x1="945" y1="614.5" x2="983" y2="614.5" stroke="#ffffff" stroke-width="1"/>
<line x1="710.5" y1="554" x2="710.5" y2="627" stroke="#ffffff" stroke-width="1"/>
<line x1="724.5" y1="554" x2="724.5" y2="627" stroke="#ffffff" stroke-width="1"/>
<line x1="792.5" y1="554" x2="792.5" y2="627" stroke="#ffffff" stroke-width="1"/>
<line x1="867.5" y1="554" x2="867.5" y2="627" stroke="#ffffff" stroke-width="1"/>
<line x1="880.5" y1="554" x2="880.5" y2="627" stroke="#ffffff" stroke-width="1"/>
<line x1="945.5" y1="554" x2="945.5" y2="627" stroke="#ffffff" stroke-width="1"/>
<line x1="982.5" y1="554" x2="982.5" y2="627" stroke="#ffffff" stroke-width="1"/>
<line x1="962.5" y1="554" x2="962.5" y2="615" stroke="#ffffff" stroke-width="1"/>
<line x1="710" y1="638.5" x2="847" y2="638.5" stroke="#ffffff" stroke-width="1"/>
<line x1="710" y1="650.5" x2="847" y2="650.5" stroke="#ffffff" stroke-width="1"/>
<line x1="710" y1="661.5" x2="847" y2="661.5" stroke="#ffffff" stroke-width="1"/>
<line x1="710" y1="673.5" x2="847" y2="673.5" stroke="#ffffff" stroke-width="1"/>
<line x1="710" y1="685.5" x2="847" y2="685.5" stroke="#ffffff" stroke-width="1"/>
<line x1="710" y1="697.5" x2="847" y2="697.5" stroke="#ffffff" stroke-width="1"/>
<line x1="710" y1="709.5" x2="847" y2="709.5" stroke="#ffffff" stroke-width="1"/>
<line x1="727.5" y1="626" x2="727.5" y2="674" stroke="#ffffff" stroke-width="1"/>
<line x1="744.5" y1="626" x2="744.5" y2="674" stroke="#ffffff" stroke-width="1"/>
<line x1="772.5" y1="626" x2="772.5" y2="674" stroke="#ffffff" stroke-width="1"/>
<line x1="799.5" y1="626" x2="799.5" y2="674" stroke="#ffffff" stroke-width="1"/>
<line x1="819.5" y1="626" x2="819.5" y2="674" stroke="#ffffff" stroke-width="1"/>
<line x1="731.5" y1="673" x2="731.5" y2="721" stroke="#ffffff" stroke-width="1"/>
<line x1="751.5" y1="673" x2="751.5" y2="721" stroke="#ffffff" stroke-width="1"/>
<line x1="778.5" y1="673" x2="778.5" y2="721" stroke="#ffffff" stroke-width="1"/>
<line x1="799.5" y1="673" x2="799.5" y2="721" stroke="#ffffff" stroke-width="1"/>
<line x1="819.5" y1="673" x2="819.5" y2="721" stroke="#ffffff" stroke-width="1"/>
<line x1="710.5" y1="626" x2="710.5" y2="721" stroke="#ffffff" stroke-width="1"/>
<line x1="846.5" y1="626" x2="846.5" y2="721" stroke="#ffffff" stroke-width="1"/>
<line x1="931.5" y1="626" x2="931.5" y2="721" stroke="#ffffff" stroke-width="1"/>
<line x1="846" y1="673.5" x2="932" y2="673.5" stroke="#ffffff" stroke-width="1"/>
<line x1="846" y1="690.5" x2="932" y2="690.5" stroke="#ffffff" stroke-width="1"/>
<line x1="846" y1="706.5" x2="932" y2="706.5" stroke="#ffffff" stroke-width="1"/>
<line x1="891.5" y1="673" x2="891.5" y2="707" stroke="#ffffff" stroke-width="1"/>
<line x1="911.5" y1="673" x2="911.5" y2="707" stroke="#ffffff" stroke-width="1"/>
<line x1="857.5" y1="690" x2="857.5" y2="707" stroke="#ffffff" stroke-width="1"/>
<line x1="869.5" y1="690" x2="869.5" y2="707" stroke="#ffffff" stroke-width="1"/>
<line x1="880.5" y1="690" x2="880.5" y2="707" stroke="#ffffff" stroke-width="1"/>
<line x1="931" y1="655.5" x2="1017" y2="655.5" stroke="#ffffff" stroke-width="1"/>
<line x1="931" y1="685.5" x2="1017" y2="685.5" stroke="#ffffff" stroke-width="1"/>
<line x1="931" y1="706.5" x2="1017" y2="706.5" stroke="#ffffff" stroke-width="1"/>
</g>
<text x="713" y="565.2" text-anchor="start" font-family="Liberation Sans" font-weight="bold" font-size="10" fill="#ffffff" stroke="#ffffff" stroke-width="0.8" textLength="4.5" lengthAdjust="spacingAndGlyphs">4</text>
<use href="#d5" x="796" y="558" width="5.50" height="8.00" color="#ffffff"/>
<use href="#d0" x="801" y="558" width="5.50" height="8.00" color="#ffffff"/>
<use href="#d1" x="806" y="558" width="5.50" height="8.00" color="#ffffff"/>
<text x="870.5" y="565" text-anchor="start" font-family="Liberation Sans" font-weight="bold" font-size="9" fill="#ffffff" stroke="#ffffff" stroke-width="0.8" textLength="3.5" lengthAdjust="spacingAndGlyphs">4</text>
<text x="883" y="565" text-anchor="start" font-family="Liberation Sans" font-weight="bold" font-size="9" fill="#ffffff" stroke="#ffffff" stroke-width="0.9" textLength="13" lengthAdjust="spacingAndGlyphs">Q235</text>
<text x="713" y="577.2" text-anchor="start" font-family="Liberation Sans" font-weight="bold" font-size="10" fill="#ffffff" stroke="#ffffff" stroke-width="0.8" textLength="4.5" lengthAdjust="spacingAndGlyphs">3</text>
<use href="#d7" x="796" y="570" width="5.50" height="8.00" color="#ffffff"/>
<use href="#d7" x="801" y="570" width="5.50" height="8.00" color="#ffffff"/>
<text x="806.50" y="578.00" font-family="Liberation Sans" font-weight="bold" font-size="10.40" fill="#ffffff" stroke="#ffffff" stroke-width="0.35" textLength="33.00" lengthAdjust="spacingAndGlyphs">40x40 L=414</text>
<text x="870.5" y="577" text-anchor="start" font-family="Liberation Sans" font-weight="bold" font-size="9" fill="#ffffff" stroke="#ffffff" stroke-width="0.8" textLength="3.5" lengthAdjust="spacingAndGlyphs">2</text>
<text x="883" y="577" text-anchor="start" font-family="Liberation Sans" font-weight="bold" font-size="9" fill="#ffffff" stroke="#ffffff" stroke-width="0.9" textLength="13" lengthAdjust="spacingAndGlyphs">Q235</text>
<text x="713" y="589.2" text-anchor="start" font-family="Liberation Sans" font-weight="bold" font-size="10" fill="#ffffff" stroke="#ffffff" stroke-width="0.8" textLength="4.5" lengthAdjust="spacingAndGlyphs">2</text>
<use href="#d7" x="796" y="582" width="5.50" height="8.00" color="#ffffff"/>
<use href="#d7" x="801" y="582" width="5.50" height="8.00" color="#ffffff"/>
<text x="806.50" y="590.00" font-family="Liberation Sans" font-weight="bold" font-size="10.40" fill="#ffffff" stroke="#ffffff" stroke-width="0.35" textLength="33.00" lengthAdjust="spacingAndGlyphs">40x40 L=443</text>
<text x="870.5" y="589" text-anchor="start" font-family="Liberation Sans" font-weight="bold" font-size="9" fill="#ffffff" stroke="#ffffff" stroke-width="0.8" textLength="3.5" lengthAdjust="spacingAndGlyphs">2</text>
<text x="883" y="589" text-anchor="start" font-family="Liberation Sans" font-weight="bold" font-size="9" fill="#ffffff" stroke="#ffffff" stroke-width="0.9" textLength="13" lengthAdjust="spacingAndGlyphs">Q235</text>
<text x="713" y="601.2" text-anchor="start" font-family="Liberation Sans" font-weight="bold" font-size="10" fill="#ffffff" stroke="#ffffff" stroke-width="0.8" textLength="4.5" lengthAdjust="spacingAndGlyphs">1</text>
<use href="#d4" x="796" y="594" width="5.50" height="8.00" color="#ffffff"/>
<use href="#d2" x="801" y="594" width="5.50" height="8.00" color="#ffffff"/>
<use href="#d1" x="806" y="594" width="5.50" height="8.00" color="#ffffff"/>
<text x="870.5" y="601" text-anchor="start" font-family="Liberation Sans" font-weight="bold" font-size="9" fill="#ffffff" stroke="#ffffff" stroke-width="0.8" textLength="3.5" lengthAdjust="spacingAndGlyphs">2</text>
<text x="883" y="601" text-anchor="start" font-family="Liberation Sans" font-weight="bold" font-size="9" fill="#ffffff" stroke="#ffffff" stroke-width="0.9" textLength="13" lengthAdjust="spacingAndGlyphs">Q235</text>
<use href="#b2" x="712" y="609" width="5.00" height="12.00" color="#ffffff"/>
<use href="#b4" x="718" y="609" width="5.00" height="12.00" color="#ffffff"/>
<use href="#b5" x="750" y="609" width="7.00" height="12.00" color="#ffffff"/>
<use href="#b4" x="758" y="609" width="7.00" height="12.00" color="#ffffff"/>
<use href="#b7" x="821" y="609" width="7.50" height="12.00" color="#ffffff"/>
<use href="#b4" x="830" y="609" width="7.50" height="12.00" color="#ffffff"/>
<use href="#b5" x="868" y="609" width="5.00" height="12.00" color="#ffffff"/>
<use href="#b7" x="874" y="609" width="5.00" height="12.00" color="#ffffff"/>
<use href="#b0" x="906" y="609" width="6.50" height="12.00" color="#ffffff"/>
<use href="#b3" x="914" y="609" width="6.50" height="12.00" color="#ffffff"/>
<use href="#d3" x="948" y="605" width="6.50" height="8.00" color="#ffffff"/>
<use href="#d1" x="954" y="605" width="6.50" height="8.00" color="#ffffff"/>
<use href="#d1" x="967" y="605" width="6.00" height="8.00" color="#ffffff"/>
<use href="#d2" x="973" y="605" width="6.00" height="8.00" color="#ffffff"/>
<use href="#d7" x="958" y="617" width="6.00" height="8.00" color="#ffffff"/>
<use href="#d7" x="964" y="617" width="6.00" height="8.00" color="#ffffff"/>
<use href="#b0" x="992" y="610" width="6.70" height="11.00" color="#ffffff"/>
<use href="#b0" x="1000" y="610" width="6.70" height="11.00" color="#ffffff"/>
<use href="#d1" x="714" y="665" width="5.60" height="8.00" color="#2af02a"/>
<use href="#d0" x="719" y="665" width="5.60" height="8.00" color="#2af02a"/>
<use href="#d4" x="730" y="665" width="6.50" height="8.00" color="#2af02a"/>
<use href="#d5" x="736" y="665" width="6.50" height="8.00" color="#2af02a"/>
<use href="#d1" x="752" y="665" width="5.60" height="8.00" color="#2af02a"/>
<use href="#d7" x="758" y="665" width="5.60" height="8.00" color="#2af02a"/>
<use href="#d5" x="772" y="665" width="5.30" height="8.00" color="#2af02a"/>
<use href="#d3" x="778" y="665" width="5.30" height="8.00" color="#2af02a"/>
<use href="#d5" x="783" y="665" width="5.30" height="8.00" color="#2af02a"/>
<use href="#d1" x="788" y="665" width="5.30" height="8.00" color="#2af02a"/>
<use href="#d4" x="794" y="665" width="5.30" height="8.00" color="#2af02a"/>
<use href="#d6" x="804" y="665" width="5.40" height="8.00" color="#2af02a"/>
<use href="#d7" x="809" y="665" width="5.40" height="8.00" color="#2af02a"/>
<use href="#d6" x="820" y="665" width="5.30" height="8.00" color="#2af02a"/>
<rect x="825.8" y="671" width="2" height="2" fill="#2af02a"/>
<use href="#d2" x="831" y="665" width="5.30" height="8.00" color="#2af02a"/>
<rect x="836.3999999999999" y="671" width="2" height="2" fill="#2af02a"/>
<use href="#d5" x="841" y="665" width="5.30" height="8.00" color="#2af02a"/>
<use href="#d6" x="715" y="677" width="5.80" height="8.00" color="#2af02a"/>
<use href="#d2" x="721" y="677" width="5.80" height="8.00" color="#2af02a"/>
<use href="#d1" x="780" y="677" width="6.00" height="8.00" color="#2af02a"/>
<use href="#d3" x="786" y="677" width="6.00" height="8.00" color="#2af02a"/>
<use href="#d3" x="792" y="677" width="6.00" height="8.00" color="#2af02a"/>
<use href="#d2" x="715" y="701" width="5.80" height="8.00" color="#2af02a"/>
<use href="#d7" x="721" y="701" width="5.80" height="8.00" color="#2af02a"/>
<use href="#d0" x="715" y="712" width="5.80" height="8.00" color="#2af02a"/>
<use href="#d0" x="721" y="712" width="5.80" height="8.00" color="#2af02a"/>
<use href="#d3" x="783" y="712" width="6.00" height="8.00" color="#2af02a"/>
<use href="#d3" x="789" y="712" width="6.00" height="8.00" color="#2af02a"/>
<use href="#b6" x="878" y="646" width="6.80" height="11.00" color="#2af02a"/>
<use href="#b1" x="886" y="646" width="6.80" height="11.00" color="#2af02a"/>
<use href="#b1" x="894" y="646" width="6.80" height="11.00" color="#2af02a"/>
<use href="#b6" x="962" y="666" width="6.80" height="12.00" color="#2af02a"/>
<use href="#b2" x="971" y="666" width="6.80" height="12.00" color="#2af02a"/>
<use href="#b3" x="979" y="666" width="6.80" height="12.00" color="#2af02a"/>
<use href="#d5" x="856" y="679" width="5.80" height="8.00" color="#2af02a"/>
<use href="#d5" x="862" y="679" width="5.80" height="8.00" color="#2af02a"/>
<use href="#d1" x="868" y="679" width="5.80" height="8.00" color="#2af02a"/>
<use href="#d0" x="874" y="679" width="5.80" height="8.00" color="#2af02a"/>
<use href="#d7" x="896" y="679" width="5.40" height="8.00" color="#2af02a"/>
<use href="#d7" x="901" y="679" width="5.40" height="8.00" color="#2af02a"/>
<use href="#d7" x="916" y="679" width="5.40" height="8.00" color="#2af02a"/>
<use href="#d4" x="921" y="679" width="5.40" height="8.00" color="#2af02a"/>
<text x="917.5" y="703" text-anchor="start" font-family="Liberation Sans" font-weight="bold" font-size="9" fill="#2af02a" stroke="#2af02a" stroke-width="0.9" textLength="9" lengthAdjust="spacingAndGlyphs">1:1</text>
<use href="#d1" x="852" y="710" width="6.00" height="9.00" color="#2af02a"/>
<use href="#d0" x="876" y="710" width="6.00" height="9.00" color="#2af02a"/>
<use href="#d4" x="896" y="710" width="6.00" height="9.00" color="#2af02a"/>
<use href="#d0" x="920" y="710" width="6.00" height="9.00" color="#2af02a"/>
</svg>
<svg width="1046" height="21" viewBox="0 0 1046 21" style="position:absolute;left:0;top:0;will-change:transform">
<rect x="0" y="0" width="1046" height="19" fill="#efefef"/>
<rect x="0" y="15" width="786" height="2" fill="#fdfdfd"/>
<rect x="0" y="17" width="786" height="1" fill="#a3a3a3"/>
<rect x="0" y="18" width="1046" height="1" fill="#e6e6e6"/>
<rect x="0" y="19" width="1046" height="1" fill="#a9a9a9"/>
<rect x="0" y="20" width="1046" height="1" fill="#3c3c3c"/>
<rect x="0" y="0" width="144" height="14" fill="#f5f5f5"/>
<rect x="126" y="0" width="18" height="14" fill="#ffffff"/>
<path d="M133 5 h7 l-3.5 4 z" fill="#000"/>
<rect x="144" y="0" width="50" height="15" fill="#eef0f2"/>
<rect x="194" y="0" width="1" height="15" fill="#c8c8c8"/>
<path d="M148 1.5 L150 0 H162 L162.5 2 L157 5 Z" fill="#dfe5ef"/>
<path d="M148 1.5 L157 5.5 L162.5 2 L163 5.5 L157 9 L148 4.5 Z" fill="#c3cde0"/>
<path d="M148 1.5 L157 5.5 L162.5 2" stroke="#6d7585" stroke-width="0.9" fill="none"/>
<path d="M148 4.5 L157 9 L163 5.5" stroke="#6d7585" stroke-width="0.9" fill="none"/>
<path d="M148 7 L157 11.5 L164 8" stroke="#d9c21a" stroke-width="2" fill="none"/>
<path d="M148 7.5 L157 12 L164 8.5" stroke="#7a6a00" stroke-width="0.5" fill="none"/>
<path d="M148.5 13.5 L152 10 M149.5 9.8 h2.7 v2.7" stroke="#16306e" stroke-width="1.3" fill="none"/>
<path d="M171 2.5 L174 0 H186 L186 3.5 L187 9 L180 12.5 L171 8.5 Z" fill="#d0d9e9"/>
<path d="M171 2.5 L180 7 L185.5 3.5" stroke="#6d7585" stroke-width="0.9" fill="none"/>
<path d="M171 5.5 L180 10 L186 6.5" stroke="#6d7585" stroke-width="0.9" fill="none"/>
<path d="M171 8.5 L180 12.5 L187 9" stroke="#6d7585" stroke-width="0.9" fill="none"/>
<path d="M183.5 7 L187 9 L183 11 Z" fill="#c7b9e0"/>
<path d="M179.5 0 L177.5 6" stroke="#16306e" stroke-width="2.2" fill="none"/>
<path d="M174.5 3.5 L177.5 8 L180.5 5 Z" fill="#16306e"/>
<rect x="197" y="0" width="1" height="16" fill="#9c9c9c"/>
<rect x="198" y="0" width="1" height="16" fill="#ffffff"/>
<rect x="201" y="0" width="1" height="16" fill="#9c9c9c"/>
<rect x="202" y="0" width="1" height="16" fill="#ffffff"/>
<rect x="205" y="0" width="1" height="16" fill="#9c9c9c"/>
<rect x="206" y="0" width="1" height="16" fill="#ffffff"/>
<rect x="209" y="0" width="149" height="15" fill="#f5f5f5"/>
<rect x="209" y="14" width="149" height="1" fill="#e2e2e2"/>
<rect x="339" y="0" width="18" height="14" fill="#ffffff"/>
<path d="M346 5 h7 l-3.5 4 z" fill="#000"/>
<rect x="215.5" y="1.5" width="9" height="9" fill="#fff" stroke="#000"/>
<text x="229" y="10" font-family="Liberation Serif" font-size="11" fill="#5e5e5e" textLength="40.5" lengthAdjust="spacingAndGlyphs">ByLayer</text>
<rect x="361" y="0" width="1" height="15" fill="#7a7a7a"/>
<rect x="365" y="0" width="159" height="15" fill="#f5f5f5"/>
<rect x="365" y="14" width="159" height="1" fill="#e2e2e2"/>
<rect x="505" y="0" width="18" height="14" fill="#ffffff"/>
<path d="M512 5 h7 l-3.5 4 z" fill="#000"/>
<rect x="370" y="6" width="59" height="1" fill="#000"/>
<text x="435" y="10" font-family="Liberation Serif" font-size="11" fill="#5e5e5e" textLength="41" lengthAdjust="spacingAndGlyphs">ByLayer</text>
<rect x="527" y="0" width="1" height="15" fill="#7a7a7a"/>
<rect x="531" y="0" width="126" height="15" fill="#f5f5f5"/>
<rect x="531" y="14" width="126" height="1" fill="#e2e2e2"/>
<rect x="638" y="0" width="18" height="14" fill="#ffffff"/>
<path d="M645 5 h7 l-3.5 4 z" fill="#000"/>
<rect x="536" y="5" width="35" height="3" fill="#000"/>
<text x="576" y="10" font-family="Liberation Serif" font-size="11" fill="#5e5e5e" textLength="40.5" lengthAdjust="spacingAndGlyphs">ByLayer</text>
<rect x="658" y="0" width="1" height="15" fill="#7a7a7a"/>
<rect x="662" y="0" width="119" height="15" fill="#efefef"/>
<rect x="662" y="14" width="119" height="1" fill="#e2e2e2"/>
<rect x="762" y="0" width="18" height="14" fill="#ffffff"/>
<path d="M769 5 h7 l-3.5 4 z" fill="#8a8a8a"/>
<rect x="781" y="0" width="1" height="16" fill="#a0a0a0"/>
<rect x="784" y="0" width="1" height="16" fill="#b8b8b8"/>
<g fill="none" stroke="#7b7b7b" stroke-width="1" stroke-linecap="square">
<path d="M673 1 V10.5 M673 1 H675.5 L674.5 4 L676 6 L675 7.5 H673.5 M677 2 L678 3 M676.5 5 H678 V9 L677 10 M676.5 10 Q679 9.5 683 10.5 M678.5 2.5 H683.5 M681 0.5 L679 5 M680 4.5 H683 V8.5 M680 4.5 V8.5 M680 6 H683 M680 7.5 H683"/>
<path d="M686.5 0.5 V1.5 M684.5 2 H689.5 M685.5 3 L686 4.5 M688.5 3 L688 4.5 M684.5 5 H689.5 M685 5 Q685 9 684 10.5 M689 6 L686.5 7.5 M689 7.5 L686 9.5 M689.5 8.5 L686 10.5 M690 1 H695 M692.5 1 L692 2.5 M690.5 2.5 H694.5 V8 H690.5 Z M690.5 4.5 H694.5 M690.5 6.2 H694.5 M691.5 8.5 L690 10.5 M693.5 8.5 L695 10.5"/>
<path d="M699 0.5 L697 3 M698.5 1.5 H702 L700.5 3.5 M697.5 3.5 H705 V7.5 H697.5 Z M701.5 3.5 V7.5 M697.5 5.5 H705 M697.5 7.5 V9.5 Q697.5 10.5 699 10.5 H706 V9"/>
</g>
</svg>
<div id="bot"></div><div id="bot2"></div><div style="position:absolute;left:4px;top:743px;width:2px;height:5px;background:#111;transform:skewX(12deg)"></div>
</body></html>
